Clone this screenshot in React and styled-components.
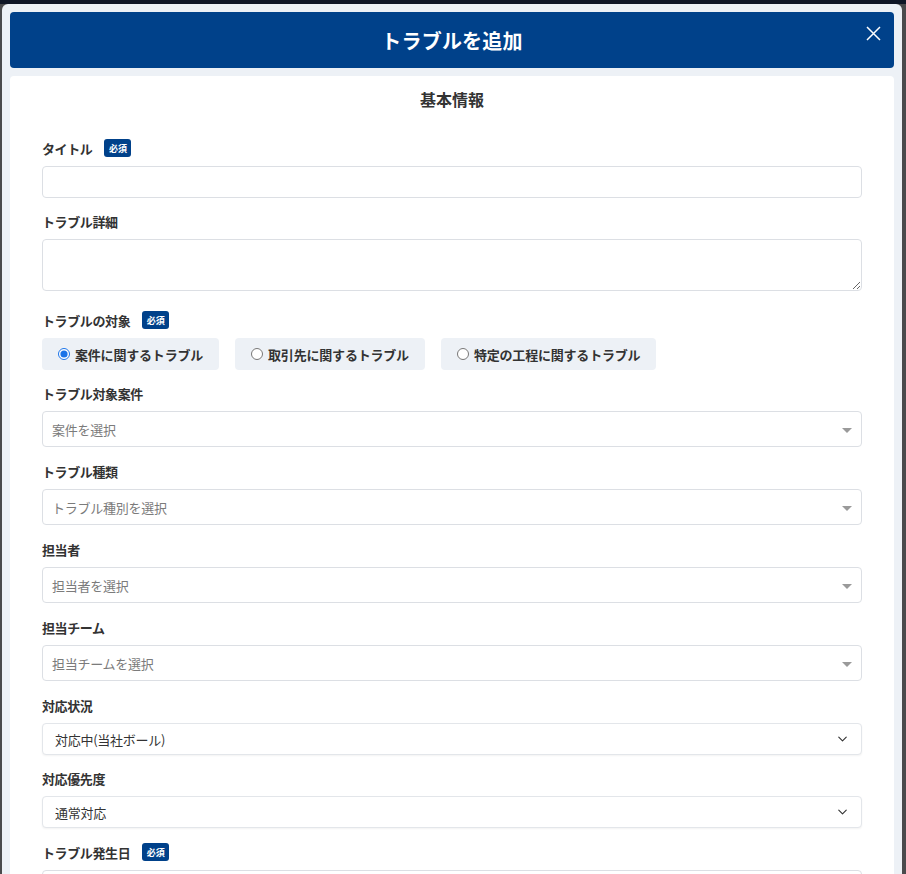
import React, { useState } from 'react';
import styled, { createGlobalStyle } from 'styled-components';
import { ChevronDown } from 'lucide-react';

const GlobalStyle = createGlobalStyle`
  html, body {
    margin: 0;
    height: 100%;
    overflow: hidden;
  }
  body {
    background: linear-gradient(#0f1626 0 4px, #4a4a4c 4px);
    font-family: "Noto Sans CJK JP", "Noto Sans", sans-serif;
    color: #333;
  }
  * {
    box-sizing: border-box;
  }
`;

const Modal = styled.div`
  margin: 4px 4px 0 2px;
  width: 900px;
  height: 870px;
  background: #edf1f6;
  border-radius: 6px 6px 0 0;
  padding: 8px;
  display: flex;
  flex-direction: column;
  gap: 8px;
  overflow: hidden;
`;

const Header = styled.header`
  position: relative;
  flex-shrink: 0;
  height: 56px;
  background: #00418a;
  border-radius: 4px;
  display: flex;
  align-items: center;
  justify-content: center;
  h1 {
    margin: 0;
    color: #fff;
    font-size: 20px;
    font-weight: 700;
    letter-spacing: 0.01em;
  }
`;

const CloseButton = styled.button`
  position: absolute;
  top: 12px;
  right: 12px;
  width: 18px;
  height: 18px;
  padding: 0;
  border: none;
  background: transparent;
  cursor: pointer;
  display: flex;
  align-items: center;
  justify-content: center;
`;

const Card = styled.section`
  flex-shrink: 0;
  background: #fff;
  border-radius: 4px;
  padding: 11px 32px 0;
  h2 {
    margin: 0 0 27px;
    text-align: center;
    font-size: 16px;
    line-height: 24px;
    font-weight: 700;
    color: #333;
  }
`;

const Field = styled.div`
  margin-bottom: ${(p) => p.$gap ?? 14}px;
`;

const Label = styled.div`
  display: flex;
  align-items: center;
  gap: 12px;
  height: 20px;
  margin-bottom: 8px;
  font-size: 13px;
  font-weight: 700;
  letter-spacing: -0.03em;
  color: #333;
`;

const Badge = styled.span`
  display: inline-flex;
  align-items: center;
  justify-content: center;
  width: 27px;
  height: 18px;
  border-radius: 3px;
  background: #00418a;
  color: #fff;
  font-size: 9px;
  font-weight: 700;
  letter-spacing: 0;
`;

const TextInput = styled.input`
  display: block;
  width: 100%;
  height: 32px;
  border: 1px solid #dcdfe4;
  border-radius: 4px;
  padding: 0 10px;
  font: inherit;
  font-size: 13px;
`;

const TextArea = styled.textarea`
  display: block;
  width: 100%;
  height: 52px;
  border: 1px solid #dcdfe4;
  border-radius: 4px;
  padding: 6px 10px;
  font: inherit;
  font-size: 13px;
`;

const RadioRow = styled.div`
  display: flex;
  gap: 16px;
`;

const RadioOption = styled.label`
  display: flex;
  align-items: center;
  height: 32px;
  padding: 0 16px;
  background: #edf1f6;
  border-radius: 4px;
  font-size: 13px;
  font-weight: 700;
  letter-spacing: -0.015em;
  color: #333;
  cursor: pointer;
  input {
    width: 12px;
    height: 12px;
    margin: 0 5px 0 0;
    accent-color: #1a73e8;
  }
`;

const SelectBox = styled.div`
  display: flex;
  align-items: center;
  justify-content: space-between;
  height: 36px;
  border: 1px solid #dcdfe4;
  border-radius: 4px;
  padding: 0 9px 0 9px;
  font-size: 13px;
  letter-spacing: -0.02em;
  color: #7b7b7b;
  cursor: pointer;
`;

const Caret = styled.span`
  width: 0;
  height: 0;
  border-left: 5px solid transparent;
  border-right: 5px solid transparent;
  border-top: 5px solid #9a9a9a;
  margin-top: 2px;
`;

const NativeWrap = styled.div`
  position: relative;
  svg {
    position: absolute;
    right: 12px;
    top: 50%;
    transform: translateY(-50%);
    pointer-events: none;
    color: #333;
  }
`;

const NativeSelect = styled.select`
  display: block;
  width: 100%;
  height: 32px;
  appearance: none;
  border: 1px solid #e3e6ea;
  border-radius: 4px;
  box-shadow: 0 1px 2px rgba(0, 0, 0, 0.05);
  background: #fff;
  padding: 0 12px;
  font: inherit;
  font-size: 13px;
  letter-spacing: -0.02em;
  color: #333;
`;

const targets = ['案件に関するトラブル', '取引先に関するトラブル', '特定の工程に関するトラブル'];

const pickers = [
  { label: 'トラブル対象案件', placeholder: '案件を選択' },
  { label: 'トラブル種類', placeholder: 'トラブル種別を選択' },
  { label: '担当者', placeholder: '担当者を選択' },
  { label: '担当チーム', placeholder: '担当チームを選択' },
];

export default function App() {
  const [target, setTarget] = useState(0);
  const [status, setStatus] = useState('対応中(当社ボール)');
  const [priority, setPriority] = useState('通常対応');

  return (
    <>
      <GlobalStyle />
      <Modal>
        <Header>
          <h1>トラブルを追加</h1>
          <CloseButton aria-label="close">
            <svg width="15" height="15" viewBox="0 0 15 15">
              <path d="M1 1L14 14M14 1L1 14" stroke="#fff" strokeWidth="1.5" fill="none" />
            </svg>
          </CloseButton>
        </Header>
        <Card>
          <h2>基本情報</h2>

          <Field $gap={13}>
            <Label>
              タイトル<Badge>必須</Badge>
            </Label>
            <TextInput type="text" />
          </Field>

          <Field $gap={19}>
            <Label>トラブル詳細</Label>
            <TextArea />
          </Field>

          <Field $gap={13}>
            <Label>
              トラブルの対象<Badge>必須</Badge>
            </Label>
            <RadioRow>
              {targets.map((t, i) => (
                <RadioOption key={t}>
                  <input
                    type="radio"
                    name="target"
                    checked={target === i}
                    onChange={() => setTarget(i)}
                  />
                  {t}
                </RadioOption>
              ))}
            </RadioRow>
          </Field>

          {pickers.map((p) => (
            <Field key={p.label}>
              <Label>{p.label}</Label>
              <SelectBox>
                {p.placeholder}
                <Caret />
              </SelectBox>
            </Field>
          ))}

          <Field $gap={13}>
            <Label>対応状況</Label>
            <NativeWrap>
              <NativeSelect value={status} onChange={(e) => setStatus(e.target.value)}>
                <option>対応中(当社ボール)</option>
                <option>対応中(先方ボール)</option>
                <option>完了</option>
              </NativeSelect>
              <ChevronDown size={15} strokeWidth={1.8} />
            </NativeWrap>
          </Field>

          <Field>
            <Label>対応優先度</Label>
            <NativeWrap>
              <NativeSelect value={priority} onChange={(e) => setPriority(e.target.value)}>
                <option>通常対応</option>
                <option>優先対応</option>
                <option>緊急対応</option>
              </NativeSelect>
              <ChevronDown size={15} strokeWidth={1.8} />
            </NativeWrap>
          </Field>

          <Field>
            <Label>
              トラブル発生日<Badge>必須</Badge>
            </Label>
            <TextInput type="text" />
          </Field>
        </Card>
      </Modal>
    </>
  );
}
